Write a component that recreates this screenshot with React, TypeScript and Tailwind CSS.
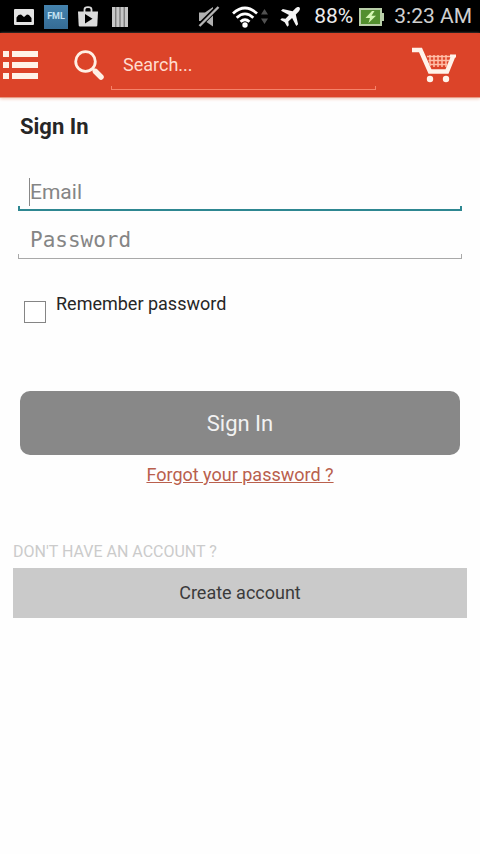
import React, { useState } from 'react';

const StatusBar: React.FC = () => (
    <div className="flex h-[33px] items-center justify-between bg-black pl-[14px] pr-2 text-[#d0d0d0]">
        <div className="flex items-center gap-[10px]">
            <svg width="20" height="16" viewBox="0 0 20 16">
                <rect width="20" height="16" rx="1" fill="#e4e4e4" />
                <path d="M2.500 13V8.500L4.500 6L7 5.500L10 8L13 5.500L15 6L17.500 9V13Z" fill="#000" />
            </svg>
            <span className="flex h-6 w-6 items-center justify-center bg-linear-to-b from-[#4583ae] to-[#356b94] text-[9px] font-bold text-[#c3e2f2]">
                FML
            </span>
            <svg width="20" height="21" viewBox="0 0 20 21">
                <path d="M6.500 6V3.500Q6.500 1.200 10 1.200T13.500 3.500V6" fill="none" stroke="#dcdcdc" strokeWidth="1.800" />
                <path d="M0 5.500H20L19.300 19.500Q19.200 20.500 18 20.500H2Q.8 20.500 .7 19.500Z" fill="#dcdcdc" />
                <path d="M7 8V17.500L14.500 12.700Z" fill="#000" />
            </svg>
            <svg width="24" height="20" viewBox="0 0 24 20">
                <rect x="4" width="16" height="20" fill="#c8c8c8" />
                <path d="M7.800 0V20M12 0V20M16.200 0V20" stroke="#555" strokeWidth=".9" />
            </svg>
        </div>
        <div className="flex items-center gap-[6px]">
            <svg width="22" height="21" viewBox="0 0 22 21">
                <path d="M1 6.500H7L15 1V20.500L7 15H1Z" fill="#b0b0b0" />
                <path d="M0 21L21 0" stroke="#000" strokeWidth="4.800" />
                <path d="M1.500 20L20.500 1" stroke="#b5b5b5" strokeWidth="2.400" />
            </svg>
            <span className="flex items-center gap-[3px] pl-[6px]">
                <svg width="26" height="22" viewBox="0 0 26 22" fill="none" stroke="#fff" strokeWidth="2.800">
                    <path d="M1 7.500Q13 -3.500 25 7.500M4.700 11.700Q13 4 21.300 11.700M8.500 15.700Q13 11.700 17.500 15.700" />
                    <circle cx="13" cy="19" r="2.700" fill="#fff" stroke="none" />
                </svg>
                <svg width="7" height="15" viewBox="0 0 7 15" fill="#515151">
                    <path d="M0 5.500L3.500 0L7 5.500ZM0 9.500L3.500 15L7 9.500Z" />
                </svg>
            </span>
            <svg className="ml-[6px]" width="20" height="20" viewBox="0 0 20 20" fill="#f4f4f4">
                <path d="M19.500 .5C18.500 -.4 16.600 .2 15.300 1.500L12.600 4.200L2.800 1.900L1 3.700L9 7.900L5.500 11.700L1.800 11.200L.3 12.700L4.700 15.300L7.300 19.700L8.800 18.200L8.300 14.500L12.100 11L16.300 19L18.100 17.200L15.800 7.400L18.500 4.700C19.800 3.400 20.400 1.500 19.500 .5Z" />
            </svg>
            <span className="pl-2 text-[21px] text-[#ececec]">88%</span>
            <svg width="25" height="18" viewBox="0 0 25 18">
                <path d="M22 5H25V13H22Z" fill="#b9cfa9" />
                <rect x="1" y="1" width="21" height="16" fill="#538f2f" stroke="#b9cfa9" strokeWidth="2" />
                <path d="M13 3L6.500 10H11L9.500 15L17 7.800H12.500L15.500 3Z" fill="#d4f5b2" />
            </svg>
            <span className="pl-1 text-[21px]">3:23 AM</span>
        </div>
    </div>
);

const ListIcon = () => (
    <svg width="35" height="28" viewBox="0 0 35 28" fill="#fff3e8">
        <path d="M0 0H6V6H0ZM9 0H35V6H9ZM0 11H6V17H0ZM9 11H35V17H9ZM0 22H6V28H0ZM9 22H35V28H9Z" />
    </svg>
);

const SearchIcon = () => (
    <svg width="30" height="30" viewBox="0 0 30 30" fill="none" stroke="#fff0e4">
        <circle cx="11.500" cy="11.500" r="9.800" strokeWidth="2.800" />
        <path d="M18 18L22 22" strokeWidth="3" />
        <path d="M21.500 21.500L27 27" strokeWidth="5.500" strokeLinecap="round" />
    </svg>
);

const CartIcon = () => (
    <svg width="44" height="36" viewBox="0 0 44 36" fill="none" stroke="#fff3ea">
        <path d="M0 3H8.500L18 24.500H35L41.500 8.500" strokeWidth="4.500" />
        <path d="M38 9H44" strokeWidth="3" />
        <path d="M15 9.500H38M16.500 13.500H37M18 17.500H35.500M18 8V19M22 8V20M26 8V20M30 8V20M34 8V20" stroke="#ffbfa8" strokeWidth="1.500" />
        <circle cx="18" cy="32" r="3.200" fill="#fff3ea" stroke="none" />
        <circle cx="34" cy="32" r="3.200" fill="#fff3ea" stroke="none" />
    </svg>
);

const Header: React.FC = () => (
    <header className="flex h-[65px] items-center border-b border-[#e79a84] bg-[#dc4429] pl-[3px] pr-6 shadow-[0_1px_3px_#f3c9b8]">
        <button type="button" aria-label="Menu">
            <ListIcon />
        </button>
        <form className="flex flex-1 items-center pl-9" onSubmit={(e) => e.preventDefault()}>
            <button type="submit" aria-label="Search">
                <SearchIcon />
            </button>
            <div className="flex-1 pl-[7px] pt-[6px]">
                <input
                    type="search"
                    aria-label="Search"
                    placeholder="Search..."
                    className="block h-10 w-full bg-transparent px-3 pb-1 text-lg text-white outline-none placeholder:text-[#ffdccf]"
                />
                <div className="h-1 border-x border-b border-[#f5836a]" />
            </div>
        </form>
        <button type="button" aria-label="Cart" className="ml-9">
            <CartIcon />
        </button>
    </header>
);

interface FieldProps {
    type: string;
    label: string;
    value: string;
    onChange: (value: string) => void;
    inputClass: string;
    lineClass: string;
    showCaret?: boolean;
}

const Field: React.FC<FieldProps> = ({ type, label, value, onChange, inputClass, lineClass, showCaret }) => (
    <div className="relative">
        <input
            type={type}
            value={value}
            aria-label={label}
            placeholder={label}
            onChange={(e) => onChange(e.target.value)}
            className={`block w-full bg-transparent px-3 outline-none placeholder:text-[#858585] ${inputClass}`}
        />
        {showCaret && !value && <span className="absolute left-[11px] top-1 h-7 w-px bg-[#888888]" />}
        <div className={lineClass} />
    </div>
);

const App: React.FC = () => {
    const [email, setEmail] = useState('');
    const [password, setPassword] = useState('');
    const [remember, setRemember] = useState(false);

    return (
        <div className="min-h-screen bg-[#fefefe] font-[Roboto,sans-serif] text-[#262626]">
            <StatusBar />
            <Header />
            <main className="pt-[13px]">
                <form className="px-[18px]" onSubmit={(e) => e.preventDefault()}>
                    <h1 className="pl-[2px] text-[22px] leading-8 font-bold">Sign In</h1>
                    <div className="pt-[31px]">
                        <Field
                            type="email"
                            label="Email"
                            value={email}
                            onChange={setEmail}
                            inputClass="h-8 pt-1 text-[21px] leading-7"
                            lineClass="h-[5px] border-x-2 border-b-2 border-[#2e8791]"
                            showCaret
                        />
                        <Field
                            type="password"
                            label="Password"
                            value={password}
                            onChange={setPassword}
                            inputClass="h-[43px] pt-[15px] font-['DejaVu_Sans_Mono',monospace] text-[21px] leading-7"
                            lineClass="h-[5px] border-x border-b border-[#a9a9a9]"
                        />
                    </div>
                    <div className="flex items-start gap-[10px] pl-[6px] pt-[31px]">
                        <input
                            id="remember"
                            type="checkbox"
                            checked={remember}
                            onChange={(e) => setRemember(e.target.checked)}
                            className="mt-[11px] h-[22px] w-[22px] appearance-none border border-[#858585] bg-white checked:bg-[#2e8791]"
                        />
                        <label htmlFor="remember" className="text-lg leading-7">Remember password</label>
                    </div>
                    <div className="px-[2px] pt-[68px]">
                        <button type="submit" className="h-16 w-full rounded-[10px] bg-[#888888] text-[22px] text-[#f2f2f2]">
                            Sign In
                        </button>
                    </div>
                    <div className="pt-1 text-center">
                        <a href="#forgot" className="text-lg leading-8 text-[#b9604d] underline">Forgot your password ?</a>
                    </div>
                </form>
                <section className="px-[13px] pt-12">
                    <h2 className="text-base leading-[26px] text-[#cbcbcb]">DON'T HAVE AN ACCOUNT ?</h2>
                    <button type="button" className="mt-[3px] h-[50px] w-full bg-[#cacaca] text-lg text-[#3b3b3b]">
                        Create account
                    </button>
                </section>
            </main>
        </div>
    );
};

export default App;
